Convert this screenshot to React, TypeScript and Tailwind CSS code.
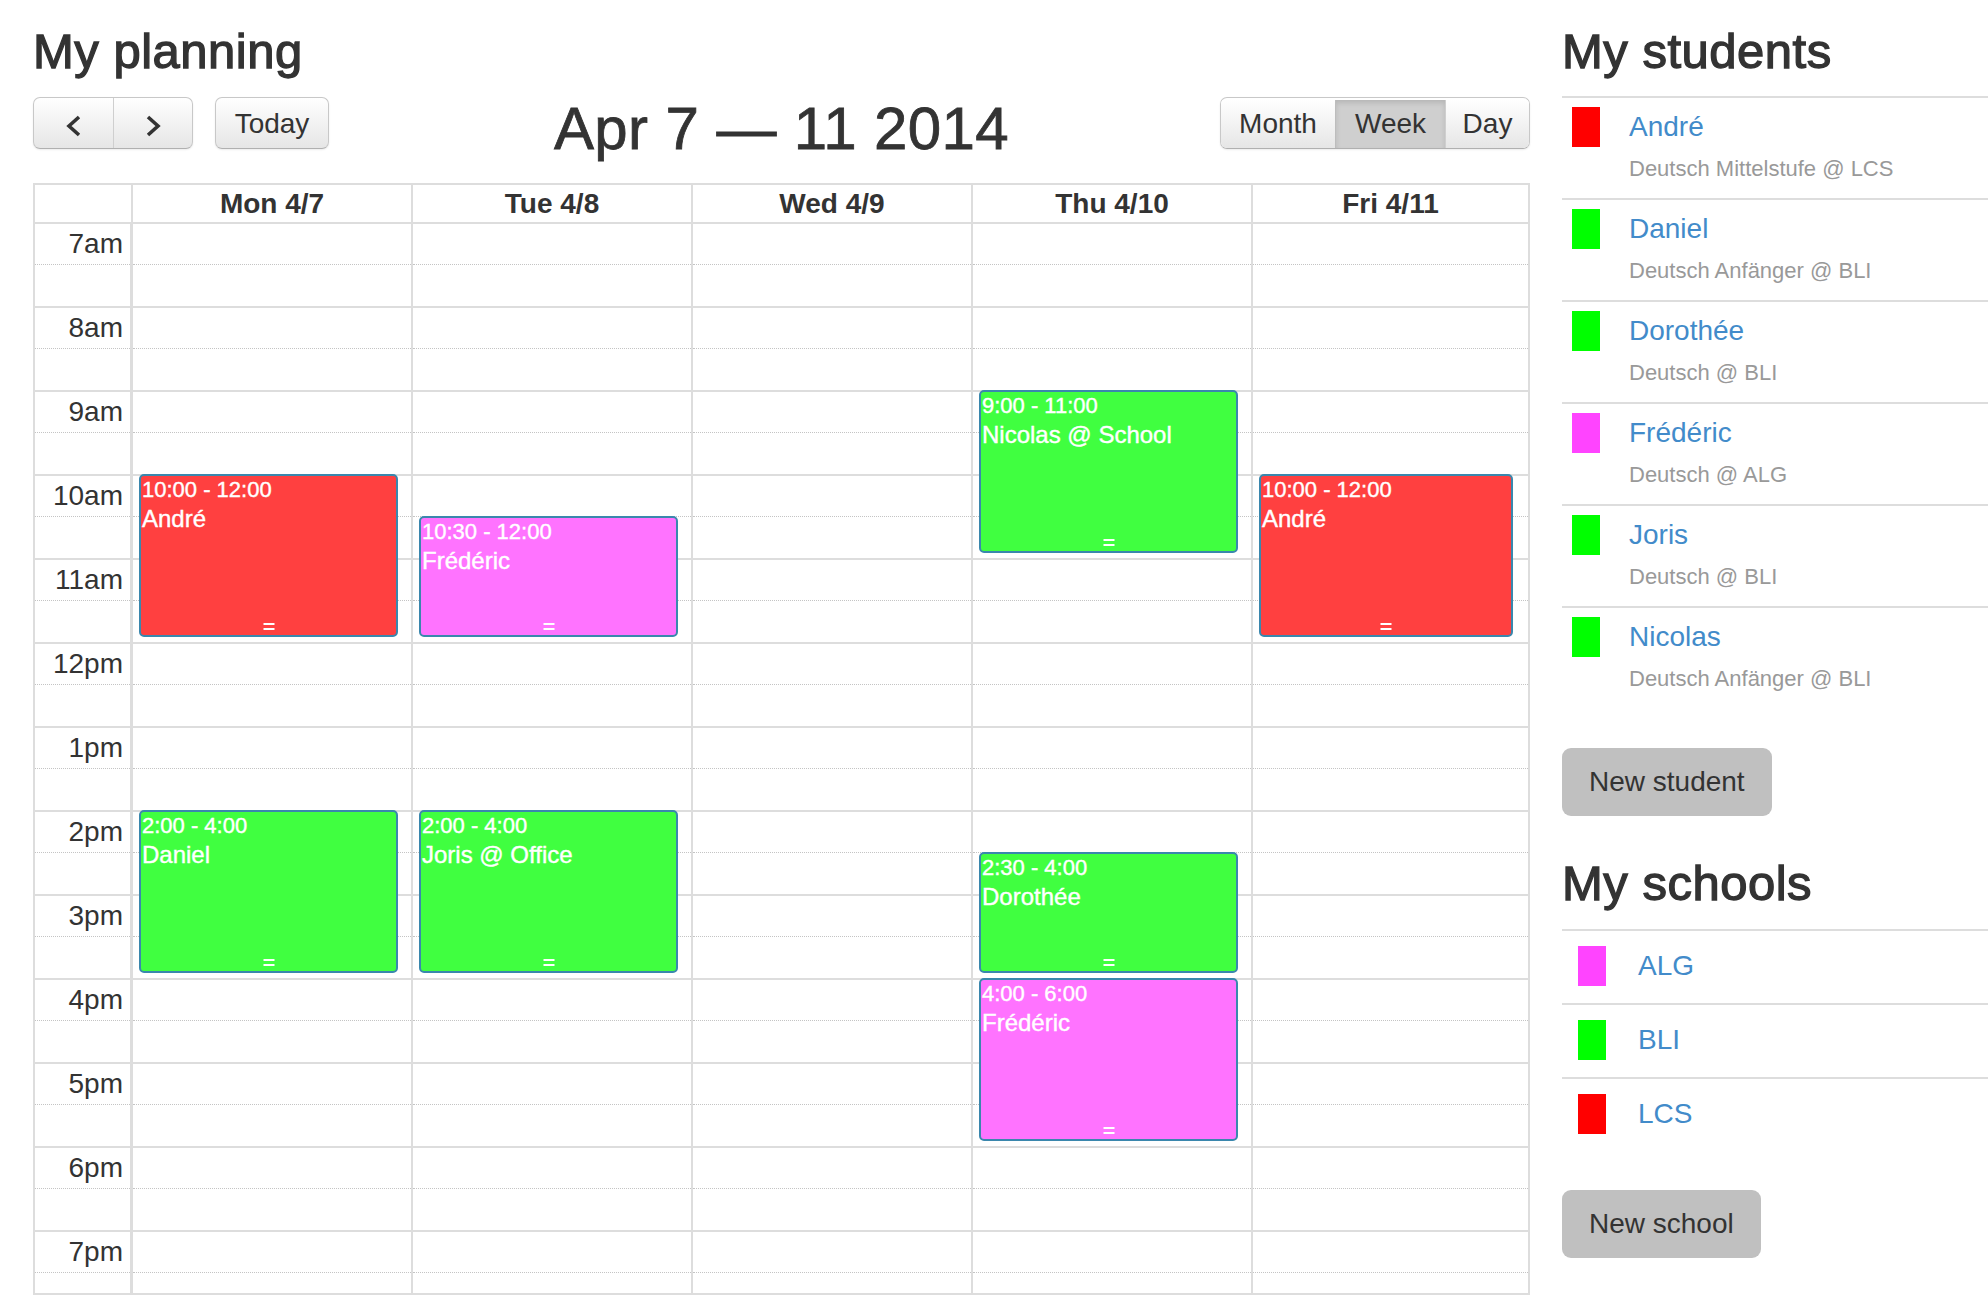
import React from "react";

const HOUR = 84;
const hours = ["7am", "8am", "9am", "10am", "11am", "12pm", "1pm", "2pm", "3pm", "4pm", "5pm", "6pm", "7pm"];
const days = ["Mon 4/7", "Tue 4/8", "Wed 4/9", "Thu 4/10", "Fri 4/11"];

type Ev = { day: number; start: number; end: number; time: string; title: string; bg: string };

const events: Ev[] = [
  { day: 0, start: 10, end: 12, time: "10:00 - 12:00", title: "André", bg: "bg-[#ff4040]" },
  { day: 1, start: 10.5, end: 12, time: "10:30 - 12:00", title: "Frédéric", bg: "bg-[#ff73ff]" },
  { day: 3, start: 9, end: 11, time: "9:00 - 11:00", title: "Nicolas @ School", bg: "bg-[#40ff40]" },
  { day: 4, start: 10, end: 12, time: "10:00 - 12:00", title: "André", bg: "bg-[#ff4040]" },
  { day: 0, start: 14, end: 16, time: "2:00 - 4:00", title: "Daniel", bg: "bg-[#40ff40]" },
  { day: 1, start: 14, end: 16, time: "2:00 - 4:00", title: "Joris @ Office", bg: "bg-[#40ff40]" },
  { day: 3, start: 14.5, end: 16, time: "2:30 - 4:00", title: "Dorothée", bg: "bg-[#40ff40]" },
  { day: 3, start: 16, end: 18, time: "4:00 - 6:00", title: "Frédéric", bg: "bg-[#ff73ff]" },
];

const students = [
  { name: "André", sub: "Deutsch Mittelstufe @ LCS", sw: "bg-[#ff0000]" },
  { name: "Daniel", sub: "Deutsch Anfänger @ BLI", sw: "bg-[#00ff00]" },
  { name: "Dorothée", sub: "Deutsch @ BLI", sw: "bg-[#00ff00]" },
  { name: "Frédéric", sub: "Deutsch @ ALG", sw: "bg-[#ff44ff]" },
  { name: "Joris", sub: "Deutsch @ BLI", sw: "bg-[#00ff00]" },
  { name: "Nicolas", sub: "Deutsch Anfänger @ BLI", sw: "bg-[#00ff00]" },
];

const schools = [
  { name: "ALG", sw: "bg-[#ff44ff]" },
  { name: "BLI", sw: "bg-[#00ff00]" },
  { name: "LCS", sw: "bg-[#ff0000]" },
];

const COLS = "grid-cols-[98px_280px_280px_280px_280px_1fr]";

function Chevron({ dir }: { dir: "left" | "right" }) {
  return (
    <svg width="16" height="22" viewBox="0 0 16 22" className="mt-[5px]">
      <polyline
        points={dir === "left" ? "13,2 3,11 13,20" : "3,2 13,11 3,20"}
        fill="none"
        stroke="#333"
        strokeWidth="3.6"
        strokeLinecap="butt"
        strokeLinejoin="miter"
      />
    </svg>
  );
}

function Toolbar() {
  return (
    <div className="mt-[20px] grid h-[62px] grid-cols-[1fr_auto_1fr] items-start">
      <div className="flex gap-[22px]">
        <div className="flex h-[52px] overflow-hidden rounded-[7px] border border-[#c8c8c8] border-b-[#b0b0b0] bg-linear-to-b from-white to-[#e6e6e6] shadow-[0_1px_2px_rgba(0,0,0,0.08)]">
          <div className="flex w-[79px] items-center justify-center">
            <Chevron dir="left" />
          </div>
          <div className="flex w-[79px] items-center justify-center border-l border-[#cfcfcf]">
            <Chevron dir="right" />
          </div>
        </div>
        <div className="flex h-[52px] w-[114px] items-center justify-center rounded-[7px] border border-[#c8c8c8] border-b-[#b0b0b0] bg-linear-to-b from-white to-[#e6e6e6] pt-[2px] text-[28px] text-[#333] shadow-[0_1px_2px_rgba(0,0,0,0.08)]">
          Today
        </div>
      </div>
      <h2 className="mt-[2px] whitespace-nowrap text-[60px] leading-[60px] tracking-[0.4px] text-[#333] [-webkit-text-stroke:0.8px_#333]">
        Apr 7 — 11 2014
      </h2>
      <div className="flex justify-end">
        <div className="flex h-[52px] overflow-hidden rounded-[7px] border border-[#c8c8c8] border-b-[#b0b0b0] pt-[2px] text-[28px] text-[#333] shadow-[0_1px_2px_rgba(0,0,0,0.08)]">
          <div className="flex w-[114px] items-center justify-center bg-linear-to-b from-white to-[#e6e6e6]">Month</div>
          <div className="flex w-[110px] items-center justify-center border-l border-[#bdbdbd] bg-[#cfcfcf] shadow-[inset_0_3px_5px_rgba(0,0,0,0.12)]">
            Week
          </div>
          <div className="flex w-[84px] items-center justify-center border-l border-[#cfcfcf] bg-linear-to-b from-white to-[#e6e6e6]">Day</div>
        </div>
      </div>
    </div>
  );
}

function EventBox({ ev }: { ev: Ev }) {
  const top = (ev.start - 7) * HOUR - 2;
  const height = (ev.end - ev.start) * HOUR - 5;
  return (
    <div
      className={`absolute left-[6px] right-[15px] rounded-[5px] border-2 border-[#3a87ad] ${ev.bg} pl-[1px] pt-[1px] text-white [-webkit-text-stroke:0.4px_white]`}
      style={{ top, height }}
    >
      <div className="whitespace-nowrap text-[22px] leading-[26px]">{ev.time}</div>
      <div className="mt-[1px] whitespace-nowrap text-[24px] leading-[29px]">{ev.title}</div>
      <div className="absolute bottom-[5px] left-1/2 flex -translate-x-1/2 flex-col gap-[3px]">
        <div className="h-[2px] w-[11px] bg-white" />
        <div className="h-[2px] w-[11px] bg-white" />
      </div>
    </div>
  );
}

function Calendar() {
  return (
    <div className="mt-[24px] border-2 border-[#ddd]">
      <div className={`grid h-[39px] ${COLS} border-b-2 border-[#ddd]`}>
        <div className="border-r-2 border-[#ddd]" />
        {days.map((d, i) => (
          <div
            key={d}
            className={`text-center text-[28px] font-bold leading-[37px] text-[#333] ${i < 4 ? "border-r-2 border-[#ddd]" : ""}`}
          >
            {d}
          </div>
        ))}
      </div>
      <div className="relative h-[1069px] overflow-hidden">
        {hours.map((h) => (
          <div key={h} className={`grid h-[84px] ${COLS} border-b-2 border-[#ddd]`}>
            <div className="border-r-[3px] border-[#ddd]">
              <div className="h-[41px] border-b border-dotted border-[#c4c4c4] pr-[7px] text-right text-[28px] leading-[40px] text-[#333]">
                {h}
              </div>
            </div>
            {days.map((d, i) => (
              <div key={d} className={i < 4 ? "border-r-2 border-[#ddd]" : ""}>
                <div className="h-[41px] border-b border-dotted border-[#c4c4c4]" />
              </div>
            ))}
          </div>
        ))}
        <div className={`pointer-events-none absolute inset-0 grid ${COLS}`}>
          <div />
          {days.map((d, i) => (
            <div key={d} className="relative">
              {events
                .filter((e) => e.day === i)
                .map((e, k) => (
                  <EventBox key={k} ev={e} />
                ))}
            </div>
          ))}
        </div>
      </div>
    </div>
  );
}

const H1 = "text-[49px] leading-[52px] tracking-[0.5px] text-[#333] [-webkit-text-stroke:1.3px_#333]";

export default function App() {
  return (
    <div className="flex min-h-[1306px] bg-white pl-[33px] text-[#333] [font-family:'Liberation_Sans',Arial,sans-serif]">
      <div className="w-[1497px] shrink-0">
        <h1 className={`mt-[25px] ${H1}`}>My planning</h1>
        <Toolbar />
        <Calendar />
      </div>
      <aside className="ml-[32px] min-w-0 flex-1">
        <h1 className={`mt-[25px] ${H1}`}>My students</h1>
        <div className="mt-[19px]">
          {students.map((s) => (
            <div key={s.name} className="flex border-t-2 border-[#ddd] pb-[13px] pl-[10px] pt-[9px]">
              <div className={`h-[40px] w-[28px] shrink-0 ${s.sw}`} />
              <div className="ml-[29px]">
                <div className="text-[28px] leading-[40px] text-[#428bca]">{s.name}</div>
                <div className="mt-[6px] text-[22px] leading-[32px] text-[#999]">{s.sub}</div>
              </div>
            </div>
          ))}
        </div>
        <button className="mt-[40px] block h-[68px] rounded-[9px] bg-[#c0c0c0] px-[27px] text-[28px] text-[#333]">
          New student
        </button>
        <h1 className={`mt-[41px] ${H1}`}>My schools</h1>
        <div className="mt-[20px]">
          {schools.map((s) => (
            <div key={s.name} className="flex border-t-2 border-[#ddd] pb-[17px] pl-[16px] pt-[15px]">
              <div className={`h-[40px] w-[28px] shrink-0 ${s.sw}`} />
              <div className="ml-[32px] text-[28px] leading-[40px] text-[#428bca]">{s.name}</div>
            </div>
          ))}
        </div>
        <button className="mt-[39px] block h-[68px] rounded-[9px] bg-[#c0c0c0] px-[27px] text-[28px] text-[#333]">
          New school
        </button>
      </aside>
    </div>
  );
}
